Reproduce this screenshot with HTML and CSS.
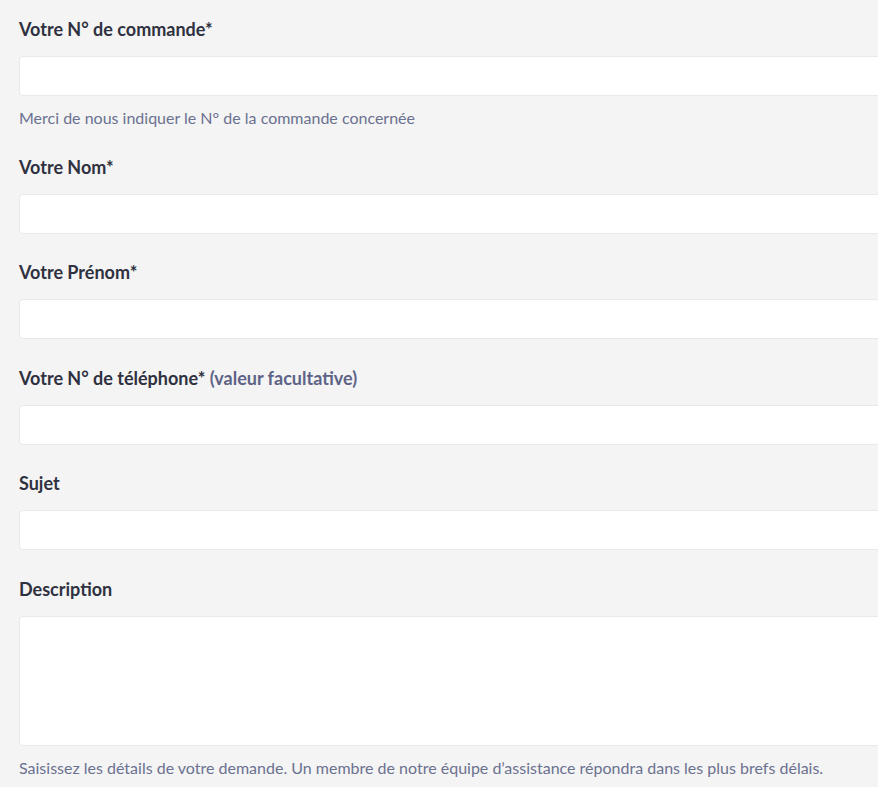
FILE: index.html
```html
<!DOCTYPE html>
<html lang="fr">
<head>
<meta charset="UTF-8">
<meta name="viewport" content="width=device-width, initial-scale=1.0">
<title>Demande d'assistance</title>
<link rel="stylesheet" href="styles.css">
</head>
<body>
<form class="request-form">
  <div class="field">
    <label class="field-label" for="order">Votre N° de commande*</label>
    <input class="field-input" type="text" id="order">
    <p class="field-hint">Merci de nous indiquer le N° de la commande concernée</p>
  </div>

  <div class="field">
    <label class="field-label" for="lastname">Votre Nom*</label>
    <input class="field-input" type="text" id="lastname">
  </div>

  <div class="field">
    <label class="field-label" for="firstname">Votre Prénom*</label>
    <input class="field-input" type="text" id="firstname">
  </div>

  <div class="field">
    <label class="field-label" for="phone">Votre N° de téléphone* <span class="optional">(valeur facultative)</span></label>
    <input class="field-input" type="text" id="phone">
  </div>

  <div class="field">
    <label class="field-label" for="subject">Sujet</label>
    <input class="field-input" type="text" id="subject">
  </div>

  <div class="field">
    <label class="field-label" for="description">Description</label>
    <textarea class="field-input field-textarea" id="description"></textarea>
    <p class="field-hint">Saisissez les détails de votre demande. Un membre de notre équipe d’assistance répondra dans les plus brefs délais.</p>
  </div>
</form>
</body>
</html>
```

FILE: styles.css
```css
body {
  font-family: 'Lato', 'Liberation Sans', sans-serif;
  margin: 0;
  padding: 18px 0 0 19px;
  background: #f4f4f4;
  color: #2f3140;
  overflow: hidden;
}

.request-form {
  width: 900px;
}

.field {
  margin-bottom: 27.5px;
}

.field-label {
  display: block;
  font-size: 18px;
  font-weight: bold;
  line-height: 22px;
  margin-bottom: 16px;
}

.optional {
  color: #5d6386;
}

.field-input {
  display: block;
  box-sizing: border-box;
  width: 100%;
  height: 40px;
  margin: 0;
  padding: 8px 12px;
  background: #fff;
  border: 1px solid #e9e9e9;
  border-radius: 4px;
  font-family: inherit;
  font-size: 15px;
  outline: none;
}

.field-textarea {
  height: 130px;
  resize: none;
}

.field-hint {
  margin: 12px 0 0;
  font-size: 16px;
  line-height: 20px;
  color: #6b7190;
}
```
